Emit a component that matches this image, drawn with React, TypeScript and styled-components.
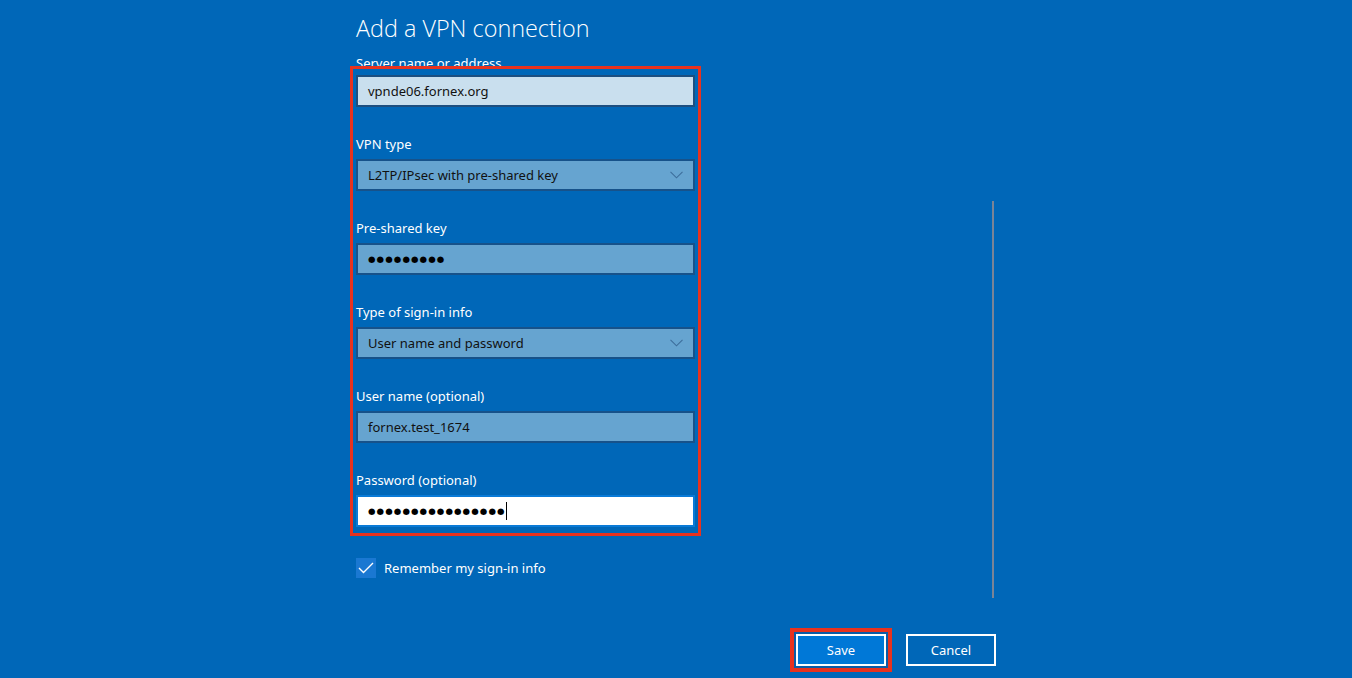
import React from 'react'
import styled, { createGlobalStyle } from 'styled-components'

const Global = createGlobalStyle`
  body {
    margin: 0;
    background: #0067b8;
    font-family: 'Noto Sans', 'Open Sans', sans-serif;
  }
`

const Page = styled.main`
  width: 1352px;
  height: 678px;
  overflow: hidden;
  background: #0067b8;
  color: #fff;
`

const Panel = styled.section`
  margin-left: 350px;
  width: 646px;
  display: flex;
  flex-direction: column;
`

const Title = styled.h1`
  margin: 0;
  height: 53px;
  padding: 12px 0 0 6px;
  box-sizing: border-box;
  font-family: 'Open Sans', 'Noto Sans', sans-serif;
  font-weight: 300;
  font-size: 23.4px;
  line-height: 32px;
  color: #fff;
`

// the list is scrolled, so this label's lower half sits under the highlight
const CutLabel = styled.div`
  height: 13px;
  overflow: hidden;
  padding-left: 6px;
  font-size: 13px;
  line-height: 20px;
`

const Body = styled.div`
  display: flex;
  align-items: flex-start;
`

const FormColumn = styled.div`
  display: flex;
  flex-direction: column;
`

const Highlight = styled.div`
  border: 3px solid #e8321e;
  padding: 6px 3px;
  display: flex;
  flex-direction: column;
  gap: 28px;
`

const Group = styled.div`
  display: flex;
  flex-direction: column;
`

const Label = styled.div`
  font-size: 13px;
  line-height: 19px;
  margin-bottom: 5px;
  color: #fff;
`

const Field = styled.div<{ $kind?: 'light' | 'mid' | 'focus' }>`
  width: 339px;
  height: 32px;
  box-sizing: border-box;
  border: 2px solid
    ${p => (p.$kind === 'focus' ? '#0a7ad6' : p.$kind === 'light' ? '#1d4f80' : '#17528a')};
  background: ${p => (p.$kind === 'focus' ? '#fff' : p.$kind === 'light' ? '#c9dfee' : '#66a4d0')};
  display: flex;
  align-items: center;
  padding: 0 10px 0 10px;
  font-size: 13px;
  color: #111;
`

const Value = styled.span`
  flex: 1;
`

const Dots = styled.span`
  font-family: 'DejaVu Sans', sans-serif;
  font-size: 8.6px;
  letter-spacing: 1.1px;
  color: #000;
`

const Caret = styled.span`
  width: 1px;
  height: 18px;
  background: #000;
`

const Spacer = styled.span`
  flex: 1;
`

const Chevron = () => (
  <svg width="13" height="8" viewBox="0 0 13 8">
    <polyline points="0.5,0.8 6.5,6.8 12.5,0.8" fill="none" stroke="#3d6e9c" strokeWidth="1.1" />
  </svg>
)

const Remember = styled.label`
  margin-top: 22px;
  padding-left: 6px;
  display: flex;
  align-items: center;
  gap: 8px;
  font-size: 13px;
  line-height: 20px;
  color: #fff;
`

const Box = styled.span`
  width: 20px;
  height: 20px;
  background: #1a78d2;
  display: flex;
  align-items: center;
  justify-content: center;
`

const Track = styled.div`
  flex: 1;
  display: flex;
  justify-content: flex-end;
  padding-right: 2px;
`

const Thumb = styled.div`
  margin-top: 135px;
  width: 2px;
  height: 397px;
  background: #7a8496;
`

const Footer = styled.div`
  margin-top: 30px;
  display: flex;
  justify-content: flex-end;
  align-items: center;
  gap: 14px;
`

const Ring = styled.div`
  border: 4px solid #e8321e;
  padding: 2px;
  background: #0a5ca8;
`

const Button = styled.button<{ $primary?: boolean }>`
  width: 90px;
  height: 32px;
  box-sizing: border-box;
  border: 2px solid #fff;
  background: ${p => (p.$primary ? '#0078d7' : 'transparent')};
  color: #fff;
  font-family: 'Noto Sans', 'Open Sans', sans-serif;
  font-size: 13px;
  display: block;
  padding: 0;
`

export default function App() {
  return (
    <Page>
      <Global />
      <Panel>
        <Title>Add a VPN connection</Title>
        <CutLabel>Server name or address</CutLabel>
        <Body>
          <FormColumn>
            <Highlight>
              <Group>
                <Field $kind="light"><Value>vpnde06.fornex.org</Value></Field>
              </Group>
              <Group>
                <Label>VPN type</Label>
                <Field><Value>L2TP/IPsec with pre-shared key</Value><Chevron /></Field>
              </Group>
              <Group>
                <Label>Pre-shared key</Label>
                <Field><Dots>●●●●●●●●●</Dots></Field>
              </Group>
              <Group>
                <Label>Type of sign-in info</Label>
                <Field><Value>User name and password</Value><Chevron /></Field>
              </Group>
              <Group>
                <Label>User name (optional)</Label>
                <Field><Value>fornex.test_1674</Value></Field>
              </Group>
              <Group>
                <Label>Password (optional)</Label>
                <Field $kind="focus"><Dots>●●●●●●●●●●●●●●●●</Dots><Caret /><Spacer /></Field>
              </Group>
            </Highlight>
            <Remember>
              <Box>
                <svg width="16" height="12" viewBox="0 0 16 12">
                  <polyline points="1,6 5.5,10.5 15,1" fill="none" stroke="#fff" strokeWidth="1.4" />
                </svg>
              </Box>
              Remember my sign-in info
            </Remember>
          </FormColumn>
          <Track><Thumb /></Track>
        </Body>
        <Footer>
          <Ring><Button $primary>Save</Button></Ring>
          <Button>Cancel</Button>
        </Footer>
      </Panel>
    </Page>
  )
}
